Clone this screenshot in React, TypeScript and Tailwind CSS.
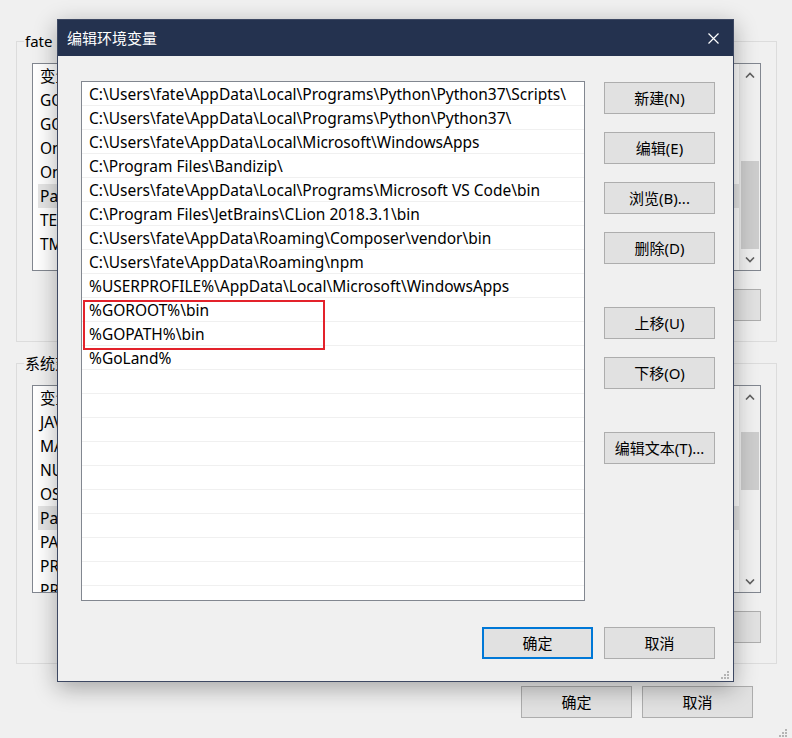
import clsx from "clsx";

const userVars = ["GOPATH", "GOROOT", "OneDrive", "OneDriveConsumer", "Path", "TEMP", "TMP"];
const systemVars = [
  "JAVA_HOME",
  "MAVEN_HOME",
  "NUMBER_OF_PROCESSORS",
  "OS",
  "Path",
  "PATHEXT",
  "PROCESSOR_ARCHITECTURE",
  "PROCESSOR_IDENTIFIER",
];

const pathEntries = [
  "C:\\Users\\fate\\AppData\\Local\\Programs\\Python\\Python37\\Scripts\\",
  "C:\\Users\\fate\\AppData\\Local\\Programs\\Python\\Python37\\",
  "C:\\Users\\fate\\AppData\\Local\\Microsoft\\WindowsApps",
  "C:\\Program Files\\Bandizip\\",
  "C:\\Users\\fate\\AppData\\Local\\Programs\\Microsoft VS Code\\bin",
  "C:\\Program Files\\JetBrains\\CLion 2018.3.1\\bin",
  "C:\\Users\\fate\\AppData\\Roaming\\Composer\\vendor\\bin",
  "C:\\Users\\fate\\AppData\\Roaming\\npm",
  "%USERPROFILE%\\AppData\\Local\\Microsoft\\WindowsApps",
  "%GOROOT%\\bin",
  "%GOPATH%\\bin",
  "%GoLand%",
];

function Btn({ children, primary }: { children: React.ReactNode; primary?: boolean }) {
  return (
    <button
      type="button"
      className={clsx(
        "flex h-[32px] w-[111px] shrink-0 items-center justify-center bg-[#e1e1e1] text-[15px] leading-none text-black",
        primary ? "border-2 border-[#0078d7]" : "border border-[#adadad]"
      )}
    >
      {children}
    </button>
  );
}

function Chevron({ down }: { down?: boolean }) {
  return (
    <svg width="10" height="6" viewBox="0 0 10 6" className={down ? "rotate-180" : ""}>
      <polyline points="1,5.5 5,1.5 9,5.5" fill="none" stroke="#606060" strokeWidth="1.6" />
    </svg>
  );
}

function Grip() {
  return (
    <svg width="9" height="9" viewBox="0 0 9 9">
      <g fill="#b4b4b4">
        <rect x="7" y="1" width="2" height="2" />
        <rect x="4" y="4" width="2" height="2" />
        <rect x="7" y="4" width="2" height="2" />
        <rect x="1" y="7" width="2" height="2" />
        <rect x="4" y="7" width="2" height="2" />
        <rect x="7" y="7" width="2" height="2" />
      </g>
    </svg>
  );
}

function VarList({
  rows,
  selected,
  thumbTop,
  thumbHeight,
}: {
  rows: string[];
  selected: string;
  thumbTop: string;
  thumbHeight: string;
}) {
  return (
    <div className="flex h-[208px] w-full border border-[#828790] bg-white text-[15.5px]">
      <div className="flex flex-1 flex-col overflow-hidden">
        <div className="flex h-[24px] shrink-0 items-center pl-[7px] pt-[2px]">变量</div>
        {rows.map((r) => (
          <div key={r} className="flex h-[24px] shrink-0 items-stretch">
            <div
              className={clsx(
                "ml-[5px] flex flex-1 items-center pl-[2px] pt-[2px]",
                r === selected && "bg-[#e5e5e5]"
              )}
            >
              {r}
            </div>
          </div>
        ))}
      </div>
      <div className="flex w-[21px] flex-col border-l border-[#e8e8e8] bg-[#f0f0f0]">
        <div className="flex h-[21px] items-center justify-center">
          <Chevron />
        </div>
        <div className="flex-1 px-[1px]">
          <div className={clsx("bg-[#cdcdcd]", thumbTop, thumbHeight)} />
        </div>
        <div className="flex h-[21px] items-center justify-center">
          <Chevron down />
        </div>
      </div>
    </div>
  );
}

function Group({
  label,
  rows,
  thumbTop,
  thumbHeight,
}: {
  label: string;
  rows: string[];
  thumbTop: string;
  thumbHeight: string;
}) {
  return (
    <div className="relative h-[301px] w-[761px] border border-[#dcdcdc] px-[15px] pt-[21px]">
      <span className="absolute left-[7px] top-[-11px] bg-[#f0f0f0] px-[1px] leading-[20px]">{label}</span>
      <VarList rows={rows} selected="Path" thumbTop={thumbTop} thumbHeight={thumbHeight} />
      <div className="mt-[18px] flex justify-end gap-[10px]">
        <Btn>新建(N)...</Btn>
        <Btn>编辑(E)...</Btn>
        <Btn>删除(D)</Btn>
      </div>
    </div>
  );
}

export default function App() {
  const emptyRows = Array.from({ length: 10 });

  return (
    <div className="relative h-[738px] w-[792px] overflow-hidden bg-[#f0f0f0] font-['Noto_Sans','Noto_Sans_CJK_SC',sans-serif] text-[15px] text-black">
      {/* parent window: 环境变量 */}
      <div className="flex flex-col pl-[16px] pt-[41px]">
        <Group label="fate 的用户变量(U)" rows={userVars} thumbTop="mt-[76px]" thumbHeight="h-[88px]" />
        <div className="mt-[21px]">
          <Group label="系统变量(S)" rows={systemVars} thumbTop="mt-[25px]" thumbHeight="h-[58px]" />
        </div>
        <div className="mt-[22px] flex justify-end gap-[10px] pr-[39px]">
          <Btn>确定</Btn>
          <Btn>取消</Btn>
        </div>
      </div>
      <div className="absolute bottom-[1px] right-[5px]">
        <Grip />
      </div>

      {/* dialog: 编辑环境变量 */}
      <div className="absolute left-[57px] top-[19px] flex h-[663px] w-[677px] flex-col border border-[#3d4862] bg-[#f0f0f0] shadow-[0_6px_22px_rgba(0,0,0,0.32)]">
        <div className="flex h-[36px] shrink-0 items-center justify-between bg-[#24324f] pl-[9px] pr-[14px] text-white">
          <span className="text-[15px]">编辑环境变量</span>
          <svg width="11" height="11" viewBox="0 0 11 11">
            <path d="M0.5 0.5L10.5 10.5M10.5 0.5L0.5 10.5" stroke="#ffffff" strokeWidth="1.2" />
          </svg>
        </div>

        <div className="flex pl-[23px] pt-[25px]">
          <div className="relative h-[520px] w-[504px] overflow-hidden border border-[#828790] bg-white text-[15.5px]">
            {pathEntries.map((p) => (
              <div
                key={p}
                className="flex h-[24px] items-center whitespace-nowrap border-b border-[#f0f0f0] pl-[7px] pt-[2px]"
              >
                {p}
              </div>
            ))}
            {emptyRows.map((_, i) => (
              <div key={i} className="h-[24px] border-b border-[#f0f0f0]" />
            ))}
            <div className="absolute left-[1px] top-[218px] h-[50px] w-[242px] border-2 border-[#e3222b]" />
          </div>

          <div className="ml-[19px] mt-[1px] flex flex-col">
            <div className="flex flex-col gap-[18px]">
              <Btn>新建(N)</Btn>
              <Btn>编辑(E)</Btn>
              <Btn>浏览(B)...</Btn>
              <Btn>删除(D)</Btn>
            </div>
            <div className="mt-[43px] flex flex-col gap-[18px]">
              <Btn>上移(U)</Btn>
              <Btn>下移(O)</Btn>
            </div>
            <div className="mt-[43px]">
              <Btn>编辑文本(T)...</Btn>
            </div>
          </div>
        </div>

        <div className="mt-[26px] flex justify-end gap-[11px] pr-[18px]">
          <Btn primary>确定</Btn>
          <Btn>取消</Btn>
        </div>

        <div className="absolute bottom-[2px] right-[4px]">
          <Grip />
        </div>
      </div>
    </div>
  );
}
